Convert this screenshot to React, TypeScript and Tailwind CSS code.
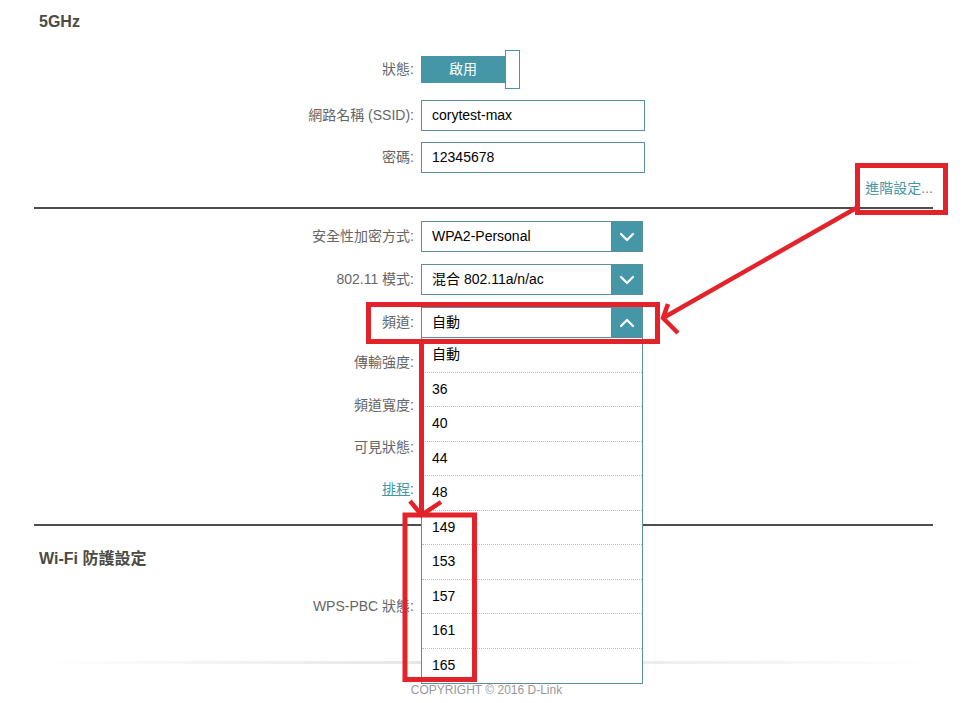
import { ChevronDown, ChevronUp } from 'lucide-react';

const channels = ['自動', '36', '40', '44', '48', '149', '153', '157', '161', '165'];

function Row({ label, children, className = '' }: { label: React.ReactNode; children?: React.ReactNode; className?: string }) {
  return (
    <div className={`flex items-center ${className}`}>
      <div className="w-[380px] text-right text-[14px] text-[#666]">{label}</div>
      <div className="ml-[7px]">{children}</div>
    </div>
  );
}

function Select({ value, open = false }: { value: string; open?: boolean }) {
  return (
    <div className="relative">
      <div className="flex h-[31px] w-[222px] items-center border border-[#5b8f9b] bg-white">
        <span className="flex-1 pl-[10px] text-[14px] text-black">{value}</span>
        <span className="flex h-full w-[31px] items-center justify-center bg-[#4597a8] text-white">
          {open ? <ChevronUp className="h-[24px] w-[24px]" strokeWidth={2.2} /> : <ChevronDown className="h-[24px] w-[24px]" strokeWidth={2.2} />}
        </span>
      </div>
      {open && (
        <ul className="absolute left-0 top-full z-10 w-[222px] border border-t-0 border-[#5b8f9b] bg-white">
          {channels.map((c, i) => (
            <li
              key={c}
              className={`flex h-[34.5px] items-center pl-[10px] text-[14px] text-black ${i < channels.length - 1 ? 'border-b border-dotted border-[#bbb]' : ''}`}
            >
              {c}
            </li>
          ))}
        </ul>
      )}
    </div>
  );
}

function TextInput({ value }: { value: string }) {
  return (
    <div className="flex h-[31px] w-[224px] items-center border border-[#5b8f9b] pl-[10px] text-[14px] text-black">{value}</div>
  );
}

export default function App() {
  return (
    <div className="relative h-[703px] w-full overflow-hidden bg-white font-['Liberation_Sans','Noto_Sans_CJK_TC',sans-serif]">
      <div className="ml-[34px] w-[899px]">
        {/* 5GHz */}
        <h2 className="pl-[5px] pt-[12px] text-[16px] font-bold leading-[20px] text-[#4b4b43]">5GHz</h2>

        <Row label="狀態:" className="mt-[18px] h-[39px]">
          <div className="flex items-center">
            <div className="flex h-[27px] w-[84px] items-center justify-center bg-[#4597a8] text-[14px] text-white">啟用</div>
            <div className="h-[39px] w-[15px] border border-[#4597a8] bg-white" />
          </div>
        </Row>
        <Row label="網路名稱 (SSID):" className="mt-[11px] h-[31px]">
          <TextInput value="corytest-max" />
        </Row>
        <Row label="密碼:" className="mt-[11px] h-[31px]">
          <TextInput value="12345678" />
        </Row>

        <div className="mt-[6px] h-[18px] text-right text-[14px] leading-[18px] text-[#4597a8]">進階設定...</div>
        <div className="mt-[10px] h-[2px] bg-[#4d4d4d]" />

        <Row label="安全性加密方式:" className="mt-[12px] h-[31px]">
          <Select value="WPA2-Personal" />
        </Row>
        <Row label="802.11 模式:" className="mt-[12px] h-[31px]">
          <Select value="混合 802.11a/n/ac" />
        </Row>
        <Row label="頻道:" className="mt-[12px] h-[31px]">
          <Select value="自動" open />
        </Row>
        <Row label="傳輸強度:" className="mt-[12px] h-[24px]" />
        <Row label="頻道寬度:" className="mt-[19px] h-[24px]" />
        <Row label="可見狀態:" className="mt-[18px] h-[24px]" />
        <Row
          label={
            <span>
              <span className="text-[#4597a8] underline">排程</span>:
            </span>
          }
          className="mt-[18px] h-[24px]"
        />
        <div className="mt-[23px] h-[2px] bg-[#4d4d4d]" />

        {/* Wi-Fi Protected Setup */}
        <h2 className="mt-[23px] pl-[5px] text-[16px] font-bold leading-[20px] text-[#4b4b43]">Wi-Fi 防護設定</h2>
        <Row label="WPS-PBC 狀態:" className="mt-[25px] h-[24px]" />
      </div>

      <div className="mx-[40px] mt-[43px] h-[3px] bg-gradient-to-r from-white via-[#e2e2e2] to-white" />
      <div className="mt-[18px] text-center text-[12px] leading-[16px] text-[#999]">COPYRIGHT © 2016 D-Link</div>

      {/* red annotations */}
      <svg className="pointer-events-none absolute inset-0 z-20" width="973" height="703" viewBox="0 0 973 703">
        <g fill="none" stroke="#e3232a" strokeWidth="5">
          <rect x="857.5" y="165.5" width="88" height="47" />
          <rect x="368.5" y="304.5" width="289" height="37" />
          <rect x="405" y="515" width="69.5" height="164.5" />
          <line x1="858" y1="207" x2="663" y2="318" strokeWidth="4.5" />
          <polyline points="668,304 663,318 678,333" strokeWidth="4.5" />
          <line x1="421.5" y1="342" x2="421.5" y2="514" strokeWidth="5" />
          <polyline points="410,501 421.5,515 441,502" strokeWidth="4.5" />
        </g>
      </svg>
    </div>
  );
}
